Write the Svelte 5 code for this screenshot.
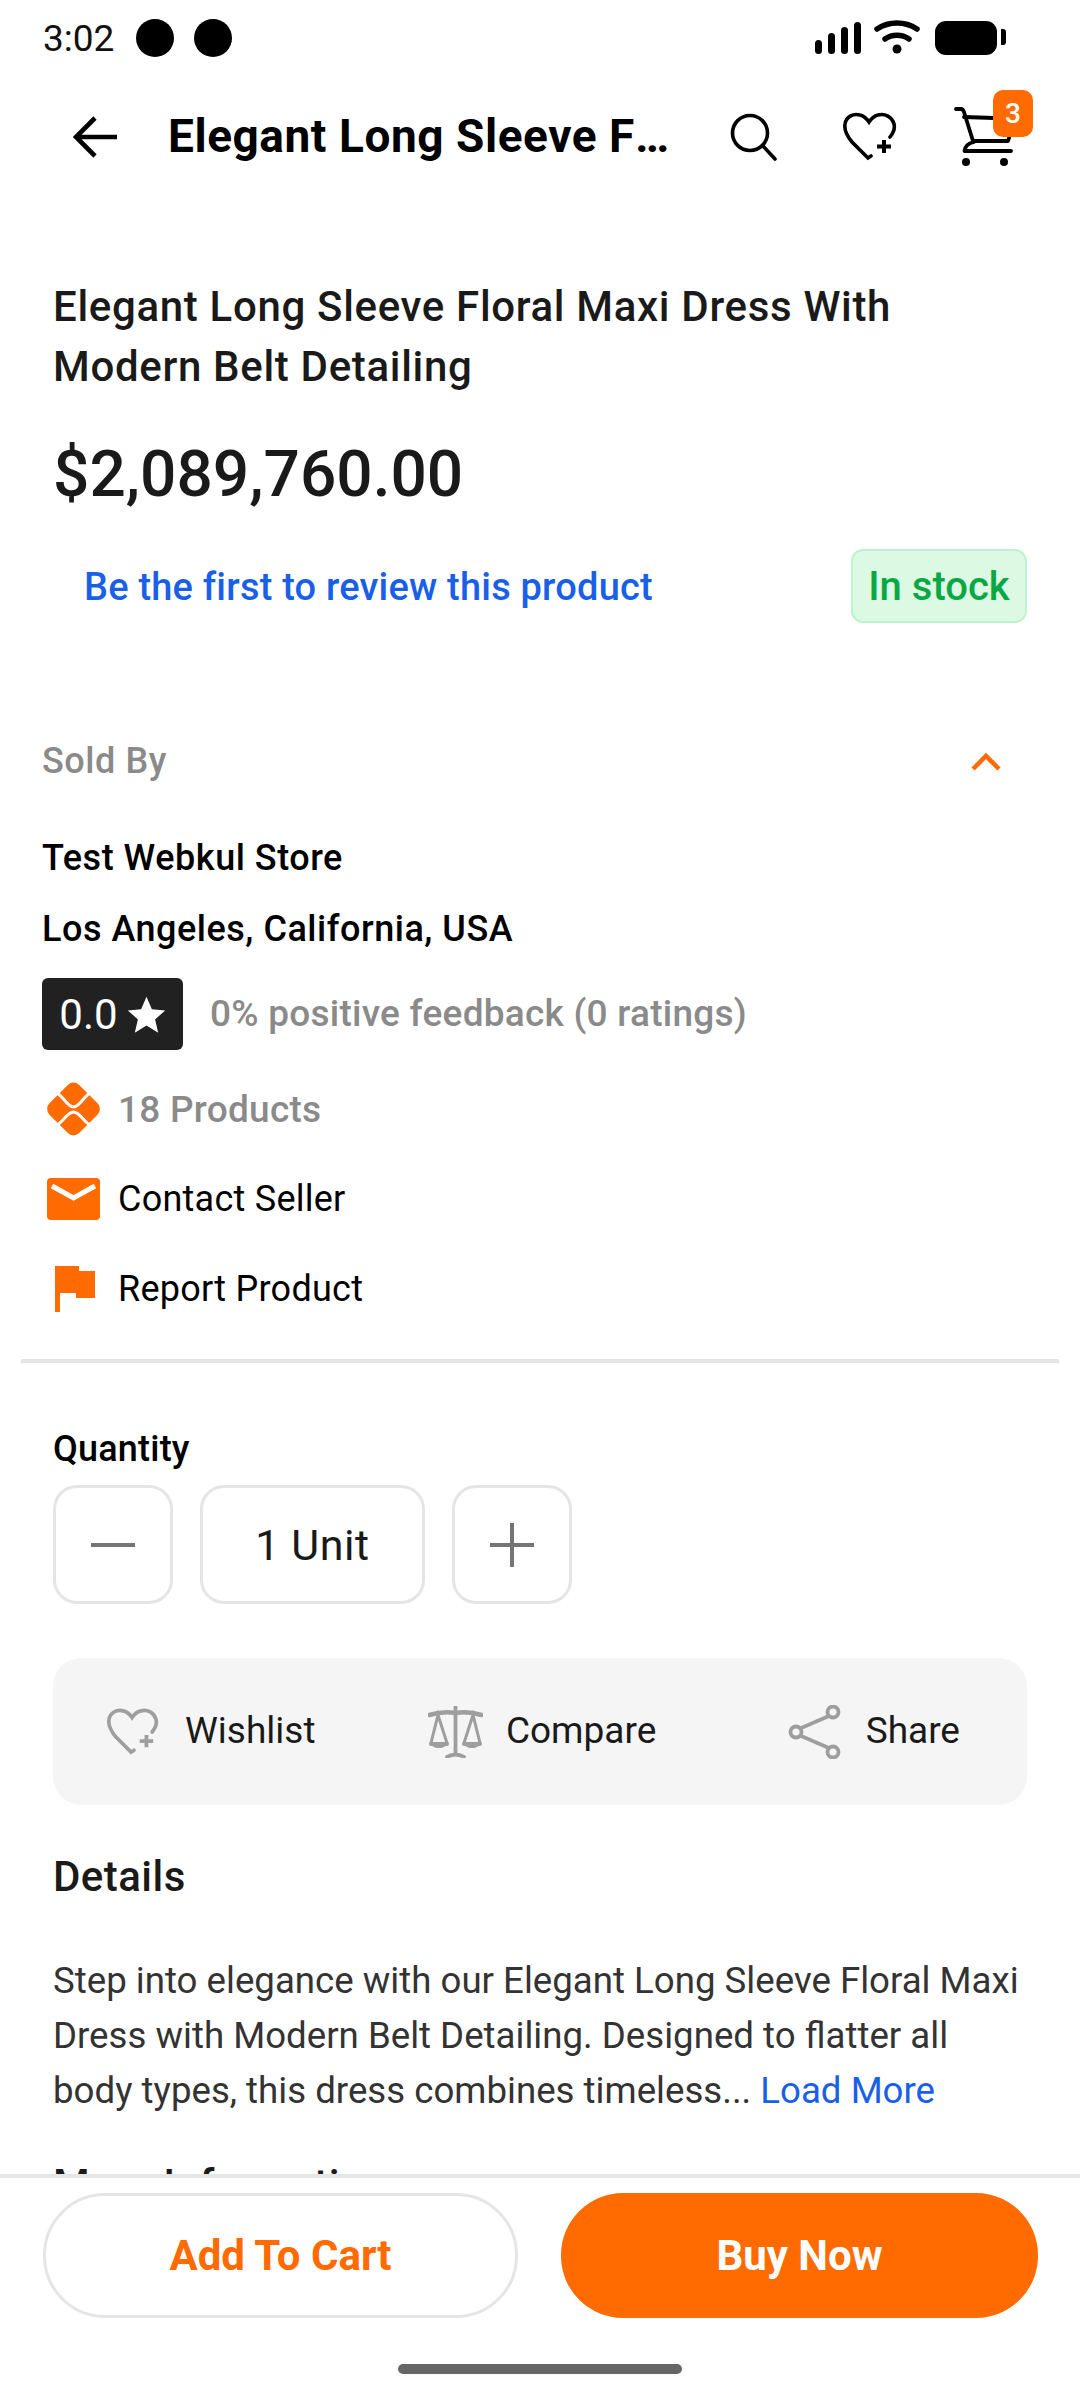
<script>
  const title = "Elegant Long Sleeve Floral Maxi Dress With Modern Belt Detailing";
  const orange = "#ff6b00";
</script>

<div class="page">
  <div class="status">
    <span class="time">3:02</span>
    <span class="dot"></span>
    <span class="dot"></span>
    <svg class="status-icons" width="190" height="36" viewBox="0 0 190 36">
      <g fill="#000">
        <rect x="3" y="20" width="7" height="14" rx="3.5" />
        <rect x="16" y="13" width="7" height="21" rx="3.5" />
        <rect x="29" y="7" width="7" height="27" rx="3.5" />
        <rect x="42" y="2" width="7" height="32" rx="3.5" />
        <circle cx="85" cy="29" r="4.5" />
        <rect x="123" y="1" width="62" height="34" rx="11" />
      </g>
      <path d="M65 9 C77 1 93 1 105 9 M73 19 C80 14 90 14 97 19" fill="none" stroke="#000" stroke-width="5.5" stroke-linecap="round" />
    </svg>
    <span class="battery-tip"></span>
  </div>

  <header class="appbar">
    <button class="icon-box back" aria-label="Back">
      <svg width="44" height="42" viewBox="0 0 44 42" fill="none" stroke="#000" stroke-width="4.6">
        <path d="M44 21 H4" />
        <path d="M22 2 L3 21 L22 40" stroke-linejoin="miter" />
      </svg>
    </button>
    <div class="appbar-title">{title}</div>
    <button class="icon-box" aria-label="Search">
      <svg width="48" height="48" viewBox="0 0 48 48" fill="none" stroke="#000" stroke-width="3.6" stroke-linecap="round">
        <circle cx="20" cy="20" r="17.5" />
        <path d="M33 33 L45 46" />
      </svg>
    </button>
    <button class="icon-box" aria-label="Wishlist">
      <svg width="54" height="50" viewBox="0 0 54 50" fill="none" stroke="#000" stroke-width="3.6" stroke-linecap="round">
        <path d="M47 25 C51 20 52 16 51 12 C49 5 42 1 35 3 C31 4 28 7 26 10 C24 7 21 4 17 3 C10 1 3 5 2 12 C1 18 4 24 9 30 L25 46 L28 44" />
        <path d="M41 28 V41 M34 34.5 H48" stroke-width="4" stroke-linecap="butt" />
      </svg>
    </button>
    <div class="icon-box cart">
      <svg width="60" height="60" viewBox="0 0 60 60" fill="none" stroke="#000" stroke-width="3.8" stroke-linecap="round" stroke-linejoin="round">
        <path d="M2 2 H7 Q9 2 10 5 L19 34 H54 L56 28" />
        <path d="M10 10 L40 11" />
        <path d="M20 35 Q11 37 10.5 44 M11 44 H57" />
        <circle cx="12" cy="55" r="4" fill="#000" stroke="none" />
        <circle cx="50" cy="55" r="4" fill="#000" stroke="none" />
      </svg>
      <span class="badge">3</span>
    </div>
  </header>

  <div class="content">
    <section class="summary">
      <h1>{title}</h1>
      <div class="price">$2,089,760.00</div>
      <div class="review-row">
        <span class="review-link">Be the first to review this product</span>
        <span class="stock">In stock</span>
      </div>
    </section>

    <section class="seller">
      <div class="sold-head">
        <span>Sold By</span>
        <svg width="32" height="20" viewBox="0 0 32 20" fill="none" stroke={orange} stroke-width="4.5">
          <path d="M3 18 L16 5 L29 18" />
        </svg>
      </div>
      <div class="store first">Test Webkul Store</div>
      <div class="store second">Los Angeles, California, USA</div>
      <div class="rating-row">
        <span class="rating">
          0.0
          <svg width="39" height="39" viewBox="0 0 24 24" fill="#fff">
            <path d="M12 1 L15.3 8.8 L23.5 9.5 L17.3 15 L19.2 23.2 L12 18.8 L4.8 23.2 L6.7 15 L0.5 9.5 L8.7 8.8 Z" />
          </svg>
        </span>
        <span class="feedback">0% positive feedback (0 ratings)</span>
      </div>
      <div class="link-row products">
        <span class="link-icon">
          <svg width="53" height="54" viewBox="0 0 53 54">
            <rect x="5.5" y="6" width="42" height="42" rx="8" fill={orange} transform="rotate(45 26.5 27)" />
            <path d="M9 11 C15 12 20 25 26.5 25 C33 25 38 12 44 11 M9 43 C15 42 20 30 26.5 30 C33 30 38 42 44 43" fill="none" stroke="#fff" stroke-width="3" />
          </svg>
        </span>
        <span>18 Products</span>
      </div>
      <div class="link-row contact">
        <span class="link-icon">
          <svg width="53" height="42" viewBox="0 0 53 42">
            <rect width="53" height="42" rx="4" fill={orange} />
            <path d="M5 8 L26.5 20 L48 8" fill="none" stroke="#fff" stroke-width="5" />
          </svg>
        </span>
        <span>Contact Seller</span>
      </div>
      <div class="link-row report">
        <span class="link-icon">
          <svg width="53" height="46" viewBox="0 0 53 46">
            <path d="M8 0 H32 V5 H48 V32 H29 V27 H13 V46 H8 Z" fill={orange} />
          </svg>
        </span>
        <span>Report Product</span>
      </div>
    </section>

    <div class="divider"></div>

    <section class="body">
      <div class="qty-label">Quantity</div>
      <div class="stepper">
        <button class="step" aria-label="Decrease">
          <svg width="44" height="44" viewBox="0 0 44 44" stroke="#757575" stroke-width="4"><path d="M0 22 H44" /></svg>
        </button>
        <div class="unit">1 Unit</div>
        <button class="step" aria-label="Increase">
          <svg width="44" height="44" viewBox="0 0 44 44" stroke="#757575" stroke-width="4"><path d="M0 22 H44 M22 0 V44" /></svg>
        </button>
      </div>

      <div class="actions">
        <div class="action">
          <svg width="52" height="48" viewBox="0 0 54 50" fill="none" stroke="#9e9e9e" stroke-width="3.8" stroke-linecap="round">
            <path d="M47 25 C51 20 52 16 51 12 C49 5 42 1 35 3 C31 4 28 7 26 10 C24 7 21 4 17 3 C10 1 3 5 2 12 C1 18 4 24 9 30 L25 46 L28 44" />
            <path d="M41 28 V41 M34 34.5 H48" stroke-width="4" stroke-linecap="butt" />
          </svg>
          <span>Wishlist</span>
        </div>
        <div class="action mid">
          <svg width="55" height="52" viewBox="0 0 55 52" fill="none" stroke="#9e9e9e" stroke-width="3.8" stroke-linecap="round">
            <path d="M27.5 1 V47 M19 51 Q27.5 46 36 51" />
            <path d="M1.5 9 Q14 5 27.5 7 Q41 5 53.5 9" stroke-width="4.5" />
            <path d="M10 9 L3 37 Q11 44 19 37 Z M45 9 L36 37 Q44 44 52 37 Z" stroke-width="3" />
            <path d="M3 38 H19 M36 38 H52" stroke-width="4" />
          </svg>
          <span>Compare</span>
        </div>
        <div class="action last">
          <svg width="54" height="54" viewBox="0 0 54 54" fill="none" stroke="#9e9e9e" stroke-width="3.8">
            <circle cx="45" cy="7" r="5.5" />
            <circle cx="8" cy="27" r="5.5" />
            <circle cx="45" cy="47" r="5.5" />
            <path d="M41 11 L12 23.5 M12 30.5 L41 43" />
          </svg>
          <span>Share</span>
        </div>
      </div>

      <h2 class="details-head">Details</h2>
      <p class="details-text">
        Step into elegance with our Elegant Long Sleeve Floral Maxi Dress with Modern Belt Detailing. Designed to flatter all body types, this dress combines timeless... <span class="more">Load More</span>
      </p>
      <h2 class="more-head">More Information</h2>
    </section>
  </div>

  <footer class="bottom">
    <div class="buttons">
      <button class="cta outline">Add To Cart</button>
      <button class="cta solid">Buy Now</button>
    </div>
    <div class="home"></div>
  </footer>
</div>

<style>
  :global(body) {
    background: #fff;
    font-family: Roboto, "Liberation Sans", sans-serif;
  }

  .page {
    width: 1080px;
    height: 2400px;
    display: flex;
    flex-direction: column;
    overflow: hidden;
    background: #fff;
    color: #000;
    font-family: Roboto, "Liberation Sans", sans-serif;
  }

  button {
    border: 0;
    background: none;
    padding: 0;
    font-family: inherit;
  }

  /* status bar */
  .status {
    height: 76px;
    flex: none;
    display: flex;
    align-items: center;
    padding: 0 0 0 43px;
    position: relative;
  }
  .time {
    font-size: 37px;
    width: 93px;
    color: #111;
  }
  .dot {
    width: 38px;
    height: 38px;
    border-radius: 50%;
    background: #000;
    margin-right: 20px;
  }
  .status-icons {
    margin-left: auto;
    margin-right: 78px;
  }
  .battery-tip {
    position: absolute;
    left: 1001px;
    top: 29px;
    width: 5px;
    height: 16px;
    border-radius: 0 3px 3px 0;
    background: #000;
  }

  /* app bar */
  .appbar {
    height: 122px;
    flex: none;
    display: flex;
    align-items: center;
    padding: 0 36px;
  }
  .icon-box {
    width: 116px;
    height: 100%;
    flex: none;
    display: flex;
    align-items: center;
    justify-content: center;
    position: relative;
  }
  .back svg {
    margin-left: 2px;
  }
  .appbar-title {
    flex: 1;
    min-width: 0;
    margin: 0 22px 2px 16px;
    font-size: 46px;
    font-weight: 700;
    letter-spacing: 0.55px;
    white-space: nowrap;
    overflow: hidden;
    text-overflow: ellipsis;
  }
  .cart svg {
    margin: 0 5px 1px 0;
  }
  .badge {
    position: absolute;
    left: 65px;
    top: 14px;
    width: 40px;
    height: 47px;
    border-radius: 10px;
    background: #ff6b00;
    color: #fff;
    font-size: 28px;
    font-weight: 500;
    display: flex;
    align-items: center;
    justify-content: center;
  }

  .content {
    flex: 1;
    min-height: 0;
    overflow: hidden;
  }

  /* product summary */
  .summary {
    padding: 79px 53px 0;
  }
  h1 {
    margin: 0;
    font-size: 42px;
    font-weight: 500;
    line-height: 60px;
    letter-spacing: 0.67px;
    color: #1a1a1a;
  }
  .price {
    margin-top: 38px;
    font-size: 64px;
    font-weight: 500;
    line-height: 80px;
    color: #1a1a1a;
  }
  .review-row {
    margin-top: 34px;
    display: flex;
    align-items: center;
    justify-content: space-between;
    padding-left: 31px;
  }
  .review-link {
    font-size: 38px;
    font-weight: 500;
    letter-spacing: 0.2px;
    color: #1a5fe8;
    padding-top: 2px;
  }
  .stock {
    width: 176px;
    height: 74px;
    box-sizing: border-box;
    display: flex;
    align-items: center;
    justify-content: center;
    border: 2px solid #bff2cf;
    border-radius: 12px;
    background: #dcf9e4;
    color: #0aa845;
    font-size: 40px;
    font-weight: 500;
  }

  /* seller block */
  .seller {
    padding: 113px 42px 0;
  }
  .sold-head {
    display: flex;
    align-items: center;
    justify-content: space-between;
    padding-right: 36px;
    font-size: 36px;
    font-weight: 500;
    letter-spacing: 0.55px;
    line-height: 50px;
    color: #8a8a8a;
  }
  .store {
    font-size: 36px;
    font-weight: 500;
    letter-spacing: 0.52px;
    line-height: 50px;
  }
  .store.first {
    margin-top: 47px;
  }
  .store.second {
    margin-top: 21px;
  }
  .rating-row {
    margin-top: 24px;
    display: flex;
    align-items: center;
    gap: 27px;
  }
  .rating {
    width: 141px;
    height: 72px;
    border-radius: 6px;
    background: #212121;
    color: #fff;
    font-size: 42px;
    display: flex;
    align-items: center;
    justify-content: center;
    gap: 9px;
  }
  .feedback {
    font-size: 37px;
    font-weight: 500;
    letter-spacing: 0.25px;
    color: #8a8a8a;
    margin-bottom: 2px;
  }
  .link-row {
    display: flex;
    align-items: center;
    height: 50px;
    font-size: 36px;
    letter-spacing: 0.25px;
  }
  .link-icon {
    width: 76px;
    padding-left: 5px;
    box-sizing: border-box;
    display: flex;
    flex: none;
  }
  .products {
    margin-top: 32px;
    height: 54px;
    font-size: 37px;
    font-weight: 500;
    color: #8a8a8a;
  }
  .contact {
    margin-top: 38px;
  }
  .report {
    margin-top: 40px;
  }

  .divider {
    margin: 45px 21px 0;
    height: 4px;
    background: #e5e5e5;
  }

  /* quantity, actions, details */
  .body {
    padding: 0 53px;
  }
  .qty-label {
    margin-top: 61px;
    font-size: 36px;
    font-weight: 500;
    letter-spacing: 0.2px;
    line-height: 50px;
  }
  .stepper {
    margin-top: 11px;
    display: flex;
    gap: 27px;
  }
  .step,
  .unit {
    height: 119px;
    box-sizing: border-box;
    border: 3px solid #e5e5e5;
    border-radius: 24px;
    display: flex;
    align-items: center;
    justify-content: center;
  }
  .step {
    width: 120px;
  }
  .unit {
    width: 225px;
    font-size: 43px;
    letter-spacing: 0.6px;
    color: #1a1a1a;
  }
  .actions {
    margin-top: 54px;
    height: 147px;
    border-radius: 28px;
    background: #f5f5f5;
    display: flex;
    align-items: center;
    justify-content: space-between;
    padding: 0 67px 0 54px;
  }
  .action {
    display: flex;
    align-items: center;
    gap: 26px;
    font-size: 37px;
    color: #1a1a1a;
  }
  .action span {
    margin-bottom: 2px;
  }
  .action.mid {
    margin-right: 19px;
    gap: 23px;
  }
  .action.last {
    gap: 24px;
  }
  .details-head,
  .more-head {
    margin: 0;
    font-size: 42px;
    font-weight: 500;
    letter-spacing: 0.45px;
    line-height: 60px;
    color: #1a1a1a;
  }
  .details-head {
    margin-top: 42px;
  }
  .details-text {
    margin: 46px 0 0;
    font-size: 36.65px;
    line-height: 55px;
    color: #333;
  }
  .more {
    color: #1a5fe8;
  }
  .more-head {
    margin-top: 37px;
  }

  /* bottom bar */
  .bottom {
    height: 226px;
    flex: none;
    box-sizing: border-box;
    border-top: 4px solid #e5e5e5;
    background: #fff;
    padding-top: 15px;
  }
  .buttons {
    display: flex;
    gap: 43px;
    padding: 0 42px 0 43px;
  }
  .cta {
    height: 125px;
    box-sizing: border-box;
    border-radius: 62px;
    font-size: 42px;
    font-weight: 700;
  }
  .outline {
    flex: none;
    width: 475px;
    border: 3px solid #e5e5e5;
    color: #ff6b00;
    background: #fff;
  }
  .solid {
    flex: 1;
    background: #ff6b00;
    color: #fff;
  }
  .home {
    width: 284px;
    height: 10px;
    margin: 46px auto 0;
    border-radius: 5px;
    background: #666;
  }
</style>
